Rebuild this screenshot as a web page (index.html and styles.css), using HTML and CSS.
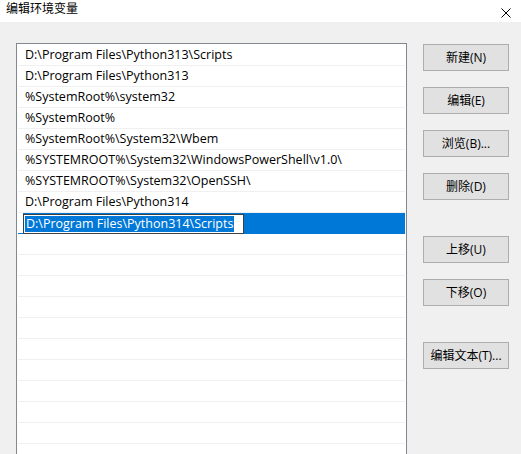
FILE: index.html
```html
<!DOCTYPE html>
<html lang="zh-CN">
<head>
<meta charset="utf-8">
<title>编辑环境变量</title>
<link rel="stylesheet" href="styles.css">
</head>
<body>
<div class="dialog">
  <header class="titlebar">
    <span class="title">编辑环境变量</span>
    <svg class="close" width="10" height="10" viewBox="0 0 10 10" aria-hidden="true">
      <path d="M0.5 0.5 L9.5 9.5 M9.5 0.5 L0.5 9.5" stroke="#000" stroke-width="1" fill="none"/>
    </svg>
  </header>
  <main class="content">
    <ul class="pathlist">
      <li class="row">D:\Program Files\Python313\Scripts</li>
      <li class="row">D:\Program Files\Python313</li>
      <li class="row">%SystemRoot%\system32</li>
      <li class="row">%SystemRoot%</li>
      <li class="row">%SystemRoot%\System32\Wbem</li>
      <li class="row">%SYSTEMROOT%\System32\WindowsPowerShell\v1.0\</li>
      <li class="row">%SYSTEMROOT%\System32\OpenSSH\</li>
      <li class="row">D:\Program Files\Python314</li>
      <li class="row row-editing">
        <span class="gutter"></span>
        <span class="editor"><span class="sel">D:\Program Files\Python314\Scripts</span></span>
      </li>
      <li class="row"></li>
      <li class="row"></li>
      <li class="row"></li>
      <li class="row"></li>
      <li class="row"></li>
      <li class="row"></li>
      <li class="row"></li>
      <li class="row"></li>
      <li class="row"></li>
      <li class="row"></li>
      <li class="row"></li>
      <li class="row"></li>
      <li class="row"></li>
    </ul>
    <div class="actions">
      <div class="group">
        <button class="btn">新建(N)</button>
        <button class="btn">编辑(E)</button>
        <button class="btn">浏览(B)...</button>
        <button class="btn">删除(D)</button>
      </div>
      <div class="group">
        <button class="btn">上移(U)</button>
        <button class="btn">下移(O)</button>
      </div>
      <div class="group">
        <button class="btn">编辑文本(T)...</button>
      </div>
    </div>
  </main>
</div>
</body>
</html>
```

FILE: styles.css
```css
* {
  box-sizing: border-box;
}

html, body {
  margin: 0;
  padding: 0;
  height: 100%;
  overflow: hidden;
}

body {
  background: #f0f0f0;
  font-family: "Open Sans", "Noto Sans CJK SC", sans-serif;
  font-size: 12px;
  color: #000;
}

.dialog {
  display: flex;
  flex-direction: column;
  height: 100%;
  overflow: hidden;
}

/* window caption */
.titlebar {
  height: 22px;
  flex-shrink: 0;
  background: #fff;
  display: flex;
  justify-content: space-between;
  align-items: flex-start;
  padding: 1px 10px 0 6px;
}

.title {
  line-height: 14px;
  font-family: "Noto Sans CJK SC", sans-serif;
}

.close {
  margin-top: 7px;
}

.content {
  flex: 1;
  display: flex;
  align-items: flex-start;
  gap: 16px;
  padding: 21px 0 0 16px;
  min-height: 0;
  overflow: hidden;
}

/* list of path entries */
.pathlist {
  list-style: none;
  margin: 0;
  padding: 1px;
  width: 391px;
  background: #fff;
  border: 1px solid #828790;
  flex-shrink: 0;
  font-size: 12.5px;
}

.row {
  height: 21px;
  line-height: 20px;
  padding-left: 7px;
  border-bottom: 1px solid #f0f0f0;
  white-space: nowrap;
  overflow: hidden;
}

.row-editing {
  display: flex;
  padding-left: 0;
  background: #0078d7;
  border-bottom-color: #0078d7;
  overflow: visible;
  position: relative;
}

.gutter {
  width: 5px;
  background: #fff;
  height: 20px;
}

.editor {
  display: block;
  width: 221px;
  height: 20px;
  margin-top: 1px;
  background: #fff;
  border: 1px solid #404040;
  padding: 1px 0 0 1px;
  line-height: 16px;
  position: relative;
  z-index: 1;
  white-space: nowrap;
  overflow: hidden;
}

.sel {
  display: inline-block;
  background: #0078d7;
  color: #fff;
  height: 16px;
  padding: 0 1px;
}

/* command buttons */
.actions {
  display: flex;
  flex-direction: column;
  gap: 36px;
  margin-top: 1px;
}

.group {
  display: flex;
  flex-direction: column;
  gap: 16px;
}

.btn {
  width: 86px;
  height: 27px;
  padding: 0;
  background: #e1e1e1;
  border: 1px solid #adadad;
  border-radius: 0;
  font: inherit;
  color: #000;
  line-height: 25px;
}
```
